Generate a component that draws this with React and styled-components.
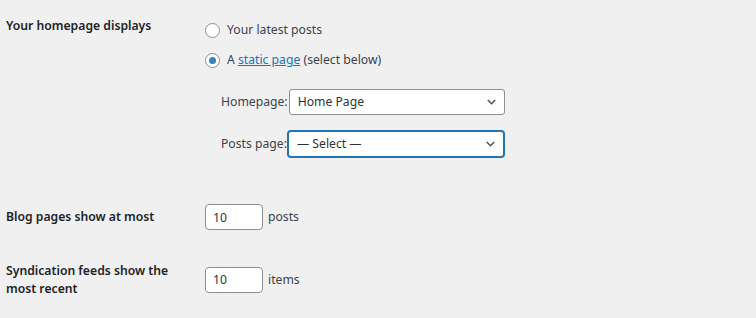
import styled, { createGlobalStyle } from "styled-components";

const GlobalStyle = createGlobalStyle`
  html, body {
    margin: 0;
    background: #f0f0f1;
  }
  body {
    font-family: "Noto Sans", "Open Sans", sans-serif;
    font-size: 12.2px;
    line-height: 17.6px;
    color: #3c434a;
  }
`;

const Form = styled.div`
  padding-left: 6px;
`;

const Row = styled.div`
  display: grid;
  grid-template-columns: 199px 1fr;
  align-items: ${(p) => (p.$center ? "center" : "start")};
  padding: ${(p) => p.$pad || "16px 0"};
`;

const Label = styled.div`
  padding: ${(p) => (p.$top ? `${p.$top}px` : "0")} 10px 0 0;
  font-weight: 600;
  color: #1d2327;
`;

const Field = styled.div`
  display: flex;
  flex-direction: column;
  padding-top: ${(p) => p.$top || 0}px;
`;

const Choices = styled.div`
  display: flex;
  flex-direction: column;
  gap: 10px;
`;

const Choice = styled.label`
  display: flex;
  align-items: center;
  height: 20px;
  gap: 7px;
`;

const Radio = styled.span`
  box-sizing: border-box;
  width: 15px;
  height: 15px;
  border-radius: 50%;
  border: 1px solid #8c8f94;
  background: #fff;
  display: flex;
  align-items: center;
  justify-content: center;

  &::after {
    content: "";
    display: ${(p) => (p.$checked ? "block" : "none")};
    width: 7px;
    height: 7px;
    border-radius: 50%;
    background: #3582c4;
  }
`;

const Link = styled.a`
  color: #2271b1;
  text-decoration: underline;
`;

const Pages = styled.div`
  display: flex;
  flex-direction: column;
  gap: 16px;
  margin-top: 19px;
  padding-left: 16px;
`;

const PageRow = styled.div`
  display: flex;
  align-items: center;
`;

const PageLabel = styled.span`
  margin-right: 1px;
`;

const Select = styled.div`
  box-sizing: border-box;
  width: 216px;
  height: 26px;
  display: flex;
  align-items: center;
  justify-content: space-between;
  padding: 0 8px;
  background: #fff;
  color: #2c3338;
  border: 1px solid ${(p) => (p.$focus ? "#2271b1" : "#8c8f94")};
  border-radius: 3px;
  box-shadow: ${(p) => (p.$focus ? "0 0 0 1px #2271b1" : "none")};
`;

const Inline = styled.div`
  display: flex;
  align-items: center;
  gap: 5px;
`;

const NumberInput = styled.input`
  box-sizing: border-box;
  width: 58px;
  height: 26px;
  margin: 0;
  padding: 0 7px;
  font: inherit;
  color: #2c3338;
  background: #fff;
  border: 1px solid #8c8f94;
  border-radius: 4px;
  outline: none;
`;

const Chevron = () => (
  <svg width="9" height="6" viewBox="0 0 9 6">
    <path d="M0.8 1l3.7 3.7L8.2 1" fill="none" stroke="#50575e" strokeWidth="1.6" />
  </svg>
);

export default function App() {
  return (
    <>
      <GlobalStyle />
      <Form>
        <Row $pad="0 0 31px">
          <Label $top={17}>Your homepage displays</Label>
          <Field $top={20}>
            <Choices>
              <Choice>
                <Radio />
                Your latest posts
              </Choice>
              <Choice>
                <Radio $checked />
                <span>
                  A <Link>static page</Link> (select below)
                </span>
              </Choice>
            </Choices>
            <Pages>
              <PageRow>
                <PageLabel>Homepage:</PageLabel>
                <Select>
                  Home Page
                  <Chevron />
                </Select>
              </PageRow>
              <PageRow>
                <PageLabel>Posts page:</PageLabel>
                <Select $focus>
                  — Select —
                  <Chevron />
                </Select>
              </PageRow>
            </Pages>
          </Field>
        </Row>
        <Row $center>
          <Label>Blog pages show at most</Label>
          <Inline>
            <NumberInput type="number" defaultValue={10} readOnly />
            posts
          </Inline>
        </Row>
        <Row $center>
          <Label>Syndication feeds show the most recent</Label>
          <Inline>
            <NumberInput type="number" defaultValue={10} readOnly />
            items
          </Inline>
        </Row>
      </Form>
    </>
  );
}
